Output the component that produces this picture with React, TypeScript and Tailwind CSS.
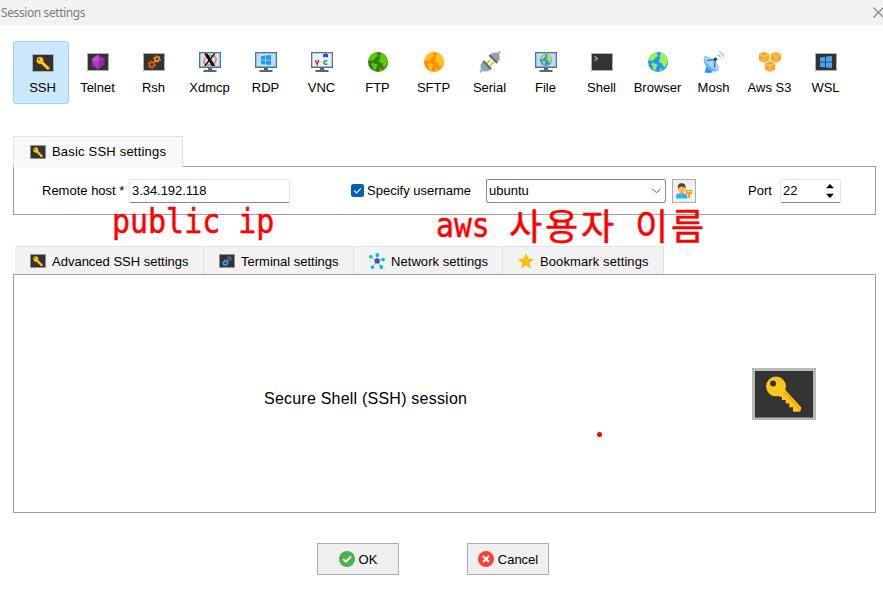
import React from "react";

type IconProps = { className?: string };

function KeyIcon({ className }: IconProps) {
  return (
    <svg className={className} viewBox="0 0 64 52" preserveAspectRatio="none">
      <rect width="64" height="52" fill="#b8b8b8" />
      <rect x="3" y="3" width="58" height="46.5" fill="#333333" />
      <path d="M33 21.5 49.3 39.5 48.5 43 47 43.8H41V39.3H37.3V35.6H33.7V32H30V29.3L26.5 28Z" fill="#ffc61e" />
      <path d="M31 24 33.5 23 48.5 40.5 47.5 42Z" fill="#efae0c" />
      <circle cx="24" cy="18.4" r="9.9" fill="#ffc61e" />
      <circle cx="21.1" cy="15.6" r="3" fill="#333333" />
    </svg>
  );
}

function KeySmall({ className }: IconProps) {
  return (
    <svg className={className} viewBox="0 0 22 18" preserveAspectRatio="none">
      <rect width="22" height="18" fill="#b0b0b0" />
      <rect x="1" y="1" width="20" height="16" fill="#333333" />
      <path d="M10 6.6 17.4 13.5V15.4H14.6L13.2 13.6 11.6 12.4 10.4 10.8 8.2 9.6Z" fill="#ffc61e" />
      <circle cx="8" cy="6.4" r="3.4" fill="#ffc61e" />
      <circle cx="6.9" cy="5.4" r=".9" fill="#333333" />
    </svg>
  );
}

function Telnet() {
  return (
    <svg width="22" height="18" viewBox="0 0 22 18">
      <rect width="22" height="18" fill="#b0b0b0" />
      <rect x="1" y="1" width="20" height="16" fill="#333333" />
      <path d="M11 1.5 17.3 5.4V11.2L11 16.5 4.7 12.4 5 6Z" fill="#9c2bb0" />
      <path d="M11 1.5 12.8 8 6.5 10 5 6Z" fill="#bb4fd0" />
      <path d="M6.5 10 12.8 8 11 16.5Z" fill="#a93bbf" />
      <path d="M12.8 8 17.3 5.4V11.2L11 16.5Z" fill="#8a2aa8" />
    </svg>
  );
}

function Gears({ className, a, b }: IconProps & { a: string; b: string }) {
  return (
    <svg className={className} viewBox="0 0 22 18" preserveAspectRatio="none">
      <rect width="22" height="18" fill="#b0b0b0" />
      <rect x="1" y="1" width="20" height="16" fill="#333333" />
      <circle cx="8.8" cy="11.5" r="2.5" fill="none" stroke={a} strokeWidth="1.8" />
      <circle cx="8.8" cy="11.5" r="3.7" fill="none" stroke={a} strokeWidth="1.3" strokeDasharray="1.7 2.17" />
      <circle cx="14" cy="6" r="2.1" fill="none" stroke={b} strokeWidth="1.5" />
      <circle cx="14" cy="6" r="3.2" fill="none" stroke={b} strokeWidth="1.2" strokeDasharray="1.4 1.95" />
    </svg>
  );
}

function Monitor({ screen = "#b9defa", children }: { screen?: string; children: React.ReactNode }) {
  return (
    <svg width="22" height="20" viewBox="0 0 22 20">
      <rect width="22" height="16" fill="#5d7380" />
      <rect x="1.3" y="1.3" width="19.4" height="13.2" fill={screen} />
      <path d="M9 16h4v2h4.5v2h-13v-2H9Z" fill="#536873" />
      {children}
    </svg>
  );
}

function Windows({ x = 0, y = 0, s = 1, fill = "#2196f3" }: { x?: number; y?: number; s?: number; fill?: string }) {
  return (
    <g transform={`translate(${x} ${y}) scale(${s})`} fill={fill}>
      <path d="M0 1.2 4.3.6V4.7H0ZM5 .5 10 0V4.7H5ZM0 5.4H4.3V9.5L0 8.9ZM5 5.4H10V10L5 9.5Z" />
    </g>
  );
}

function Lands({ fill }: { fill: string }) {
  return (
    <g fill={fill}>
      <path d="M1.1 6.2C2.6 2.8 5 1 8.5.3L9.7 1.4 8.3 2.5 10.7 3.5 9.2 5.1 7.9 4.7 7.2 6.6 5.2 8 4.7 9.6 3.2 8.2 1 8.8Z" />
      <path d="M4.1 11.1 7 11.4 9.9 13.2 8.4 15 7.6 17.6 6.7 19 4.9 16.3 4.7 14.1 3.2 12.5Z" />
      <path d="M12.3 2.2 14 1 17.7 3.8 19.4 7.4 19.3 11.2 17.8 13.8 16.7 15.7 14.9 14.1 14.3 11.4 11.7 10.6 10.8 8.3 12.4 6.1 11.8 4.5Z" />
      <path d="M12.1 16.8 14.4 16.1 13.5 18.4 11.4 19Z" />
    </g>
  );
}

function Globe({ sea, land }: { sea: string; land: string }) {
  return (
    <svg width="20" height="20" viewBox="0 0 20 20">
      <circle cx="10" cy="10" r="10" fill={sea} />
      <Lands fill={land} />
    </svg>
  );
}

function Serial() {
  return (
    <svg width="22" height="22" viewBox="0 0 22 22">
      <path d="M1 21.5 3.5 18.5M18.5 3.5 21.2.5" stroke="#90a4ae" strokeWidth="1.6" />
      <path d="m7.8 12.5 3.6-3.7M11 15l4-4" stroke="#ffb300" strokeWidth="1.7" />
      <path d="M4.3 10.2 12 18.3 9.2 20.2 4.5 20.4 1.6 18.2 1.6 13.4Z" fill="#90a4ae" />
      <path d="m3.5 10.7 1.6-1.5 7.8 8-1.6 1.5Z" fill="#546e7a" />
      <path d="m10.7 3.6 7.8 8 2-3 .2-4.8-2.2-2.2-4.5.1Z" fill="#90a4ae" />
      <path d="m9.6 4.7 1.5-1.5 7.8 8-1.5 1.5Z" fill="#546e7a" />
    </svg>
  );
}

function Shell() {
  return (
    <svg width="22" height="18" viewBox="0 0 22 18">
      <rect width="22" height="18" fill="#b0b0b0" />
      <rect x="1" y="1" width="20" height="16" fill="#333333" />
      <path d="m3.5 3.5 3.2 2-3.2 2" stroke="#e4e4e4" fill="none" />
    </svg>
  );
}

function Dish() {
  return (
    <svg width="22" height="22" viewBox="0 0 22 22">
      <path d="M1.8 21.8 3 16H8l1.5 5.8Z" fill="#2196f3" />
      <path d="M1.4 5C-.8 10.5 3 18.4 9.6 20.2 12.5 20.9 15 20 16 18.6Z" fill="#64b5f6" />
      <ellipse cx="8.6" cy="12" rx="9.8" ry="3.6" transform="rotate(43 8.6 12)" fill="#a3d3fa" />
      <path d="m4 9.5 8.2-1-.7 8" fill="none" stroke="#37566b" strokeWidth="1.1" />
      <circle cx="12.4" cy="8.3" r="1.7" fill="#1a3f9e" />
      <path d="M14.3 3.6c1.8.7 2.9 1.8 3.4 3.6M15.8.5c3.1 1 4.8 3.1 5.3 6.3" fill="none" stroke="#7cc0f7" strokeWidth="1.2" strokeDasharray="3.4 .8" />
    </svg>
  );
}

function Cube({ x, y }: { x: number; y: number }) {
  return (
    <g transform={`translate(${x} ${y})`}>
      <path d="M5.2 0 10.4 2V8.2L5.2 10.8 0 8.2V2Z" fill="#ffa726" />
      <path d="m.7 2.5 4.5 2 4.5-2M5.2 4.5v5.4" stroke="#ffe3b9" strokeWidth=".7" fill="none" />
    </g>
  );
}

function Aws() {
  return (
    <svg width="22" height="20" viewBox="0 0 22 20">
      <Cube x={0} y={0} />
      <Cube x={11.6} y={0} />
      <Cube x={5.8} y={9.2} />
    </svg>
  );
}

const tools: { label: string; icon: React.ReactNode }[] = [
  { label: "Telnet", icon: <Telnet /> },
  { label: "Rsh", icon: <Gears className="h-[18px] w-[22px]" a="#e65100" b="#fb9a17" /> },
  {
    label: "Xdmcp",
    icon: (
      <Monitor screen="#cbe6fb">
        <ellipse cx="11" cy="8.3" rx="6.3" ry="4.5" transform="rotate(-18 11 8.3)" fill="none" stroke="#f4793b" strokeWidth="1.5" />
        <path d="M5 1.5H8.5L16.3 14H12.8Z" fill="#111" />
        <path d="M15.8 1.5 5.7 14" stroke="#111" strokeWidth="1.3" />
      </Monitor>
    ),
  },
  { label: "RDP", icon: <Monitor><Windows x={6} y={3} /></Monitor> },
  {
    label: "VNC",
    icon: (
      <Monitor screen="#e3f2fd">
        <path d="m4.4 8 1.7 4.5L7.8 8" fill="none" stroke="#f02020" strokeWidth="1.5" />
        <path d="M12.8 5.2V3.7c0-2 3.6-2 3.6 0v1.5M12.8 4h3.6" fill="none" stroke="#2222dd" strokeWidth="1.3" />
        <path d="M16.2 9.2c-1.3-1-3.3-.4-3.3 1.3s2 2.3 3.3 1.3" fill="none" stroke="#159b35" strokeWidth="1.5" />
      </Monitor>
    ),
  },
  { label: "FTP", icon: <Globe sea="#387d10" land="#58cc0b" /> },
  { label: "SFTP", icon: <Globe sea="#ff8c0a" land="#ffc414" /> },
  { label: "Serial", icon: <Serial /> },
  {
    label: "File",
    icon: (
      <Monitor>
        <g transform="translate(5 2) scale(.6)">
          <circle cx="10" cy="10" r="10" fill="#2196e3" />
          <Lands fill="#c9d63f" />
        </g>
      </Monitor>
    ),
  },
  { label: "Shell", icon: <Shell /> },
  { label: "Browser", icon: <Globe sea="#2196f3" land="#98f54b" /> },
  { label: "Mosh", icon: <Dish /> },
  { label: "Aws S3", icon: <Aws /> },
  {
    label: "WSL",
    icon: (
      <svg width="22" height="18" viewBox="0 0 22 18">
        <rect width="22" height="18" fill="#b0b0b0" />
        <rect x="1" y="1" width="20" height="16" fill="#333" />
        <Windows x={5} y={3} s={1.2} fill="#42a5f5" />
      </svg>
    ),
  },
];

function Network() {
  return (
    <svg width="16" height="16" viewBox="0 0 16 16">
      <path d="M8 8 1.8 3.8M8 8V2M8 8l6.3-1.4M8 8l4.3 6M8 8l-4.6 6.2" stroke="#a3b3bc" strokeWidth="1" />
      <g fill="#00bcd4">
        <circle cx="1.9" cy="3.8" r="1.8" />
        <circle cx="8.3" cy="2" r="1.9" />
        <circle cx="14.2" cy="6.6" r="1.8" />
        <circle cx="12.3" cy="14" r="1.9" />
        <circle cx="3.5" cy="14.2" r="1.8" />
      </g>
      <circle cx="8.2" cy="7.9" r="2.7" fill="#3f51b5" />
    </svg>
  );
}

export default function App() {
  return (
    <div className="relative flex h-[596px] w-[883px] flex-col overflow-hidden bg-white font-['Liberation_Sans',sans-serif] text-[13px] leading-4 text-black">
      <header className="flex h-[25px] shrink-0 items-center justify-between bg-[#f2f2f2] pl-px">
        <span className="mt-px font-['Noto_Sans',sans-serif] text-[12px] tracking-[-0.4px] text-[#7d7d7d]">Session settings</span>
        <svg width="11" height="11" viewBox="0 0 11 11" className="-mr-px">
          <path d="m.5.5 10 10m0-10-10 10" stroke="#808080" strokeWidth="1.1" />
        </svg>
      </header>

      <nav className="mt-4 ml-[13px] flex h-[63px] shrink-0">
        <button className="flex w-14 flex-col items-center rounded-[3px] border border-[#99d1ff] bg-[#cce8ff] pt-3 pl-[3px]">
          <KeySmall className="h-[18px] w-[22px]" />
          <span className="mt-2">SSH</span>
        </button>
        {tools.map((t) => (
          <button key={t.label} className="flex w-14 flex-col items-center pt-2.5 pl-0.5">
            <span className="flex h-[22px] items-center">{t.icon}</span>
            <span className="mt-[7px] -ml-px whitespace-nowrap">{t.label}</span>
          </button>
        ))}
      </nav>

      <section className="mt-8 mr-[7px] ml-[13px] shrink-0">
        <div className="relative z-10 -mb-px flex h-[31px] w-[170px] items-center gap-[6px] border border-b-0 border-[#e3e3e3] bg-[#f9f9f9] pl-4">
          <KeySmall className="h-[14px] w-4" />
          <span className="tracking-[0.2px]">Basic SSH settings</span>
        </div>
        <div className="flex h-[49px] items-center border border-[#a0a0a0] pl-7">
          <span className="w-[87px]">Remote host *</span>
          <div className="flex h-6 w-[161px] items-center rounded-[2px] border border-[#e5e5e5] border-b-[#868686] pl-0.5 tracking-[-0.05px]">3.34.192.118</div>
          <svg width="13" height="13" viewBox="0 0 13 13" className="ml-[61px]">
            <rect width="13" height="13" rx="2.5" fill="#005fb8" />
            <path d="m3.2 6.6 2.3 2.3 4.4-4.5" stroke="#fff" fill="none" strokeWidth="1.1" />
          </svg>
          <span className="ml-[3px] w-[119px]">Specify username</span>
          <div className="flex h-6 w-[180px] items-center justify-between rounded-[2px] border border-[#868686] pr-1 pl-0.5">
            <span>ubuntu</span>
            <svg width="9" height="6" viewBox="0 0 9 6"><path d="m.5.8 4 4 4-4" fill="none" stroke="#606060" /></svg>
          </div>
          <button className="ml-1.5 flex h-6 w-6 items-center justify-center border border-[#adadad] bg-[#efefef]">
            <svg width="18" height="18" viewBox="0 0 18 18">
              <path d="M1 16.5v-2.2C1 12 3.7 11 6.7 11s5.6 1 5.6 3.3v2.2Z" fill="#29b6f6" />
              <path d="M4.7 9h4v2.6l-2 1.5-2-1.5Z" fill="#f59a23" />
              <ellipse cx="6.7" cy="6.5" rx="3.5" ry="4.2" fill="#ffb74d" />
              <path d="M3 7C2.3 3 4 1.3 6.6 1.3S11.2 3 10.5 7L9.4 4.7 4.8 4.6Z" fill="#424242" />
              <path d="M11 8h6v4h-2v4h-2v-4h-2Z" fill="#ffa000" />
              <path d="M12.5 9h3v1h-3Z" fill="#fff0cc" />
            </svg>
          </button>
          <span className="ml-[52px] w-8">Port</span>
          <div className="flex h-6 w-[61px] items-center justify-between rounded-[2px] border border-[#e5e5e5] border-b-[#868686] pr-[6px] pl-[2px]">
            <span>22</span>
            <svg width="8" height="14" viewBox="0 0 8 14"><path d="M4 0 8 4.3H0ZM0 9.7H8L4 14Z" /></svg>
          </div>
        </div>
      </section>

      <section className="mt-[31px] mr-[7px] ml-[13px] shrink-0">
        <div className="ml-0.5 flex h-7 w-[649px] border-t border-[#e3e3e3] bg-[#f2f2f2]">
          <div className="flex w-[189px] items-center gap-1.5 border-r border-[#e0e0e0] pt-px pl-[15px]">
            <KeySmall className="h-[14px] w-4" />
            <span className="mt-px">Advanced SSH settings</span>
          </div>
          <div className="flex w-[150px] items-center gap-1.5 border-r border-[#e0e0e0] pt-px pl-[15px]">
            <Gears className="h-[14px] w-4" a="#42a5f5" b="#5c6bc0" />
            <span className="mt-px">Terminal settings</span>
          </div>
          <div className="flex w-[149px] items-center gap-1.5 border-r border-[#e0e0e0] pt-px pl-[15px]">
            <Network />
            <span className="mt-px tracking-[0.06px]">Network settings</span>
          </div>
          <div className="flex w-[161px] items-center gap-1.5 border-r border-[#e0e0e0] pt-px pl-[15px]">
            <svg width="16" height="16" viewBox="0 0 16 16"><path d="m8 .3 2.3 5.3 5.7.5-4.3 3.8 1.3 5.6-5-3-5 3 1.3-5.6L0 6.1l5.7-.5Z" fill="#f4c20d" /></svg>
            <span className="mt-px tracking-[0.1px]">Bookmark settings</span>
          </div>
        </div>
        <div className="flex h-[239px] items-center border border-[#a0a0a0] pl-[250px]">
          <span className="mt-2.5 w-[488px] text-[16px] leading-5 tracking-[0.22px]">Secure Shell (SSH) session</span>
          <KeyIcon className="h-[52px] w-16" />
        </div>
      </section>

      <footer className="mt-[30px] ml-[317px] flex gap-[68px]">
        <button className="flex h-8 w-[82px] items-center justify-center gap-1 border border-[#adadad] bg-[#efefef]">
          <svg width="16" height="16" viewBox="0 0 16 16">
            <circle cx="8" cy="8" r="8" fill="#4caf50" />
            <path d="m4.2 8 2.7 2.7 5.3-5.3" stroke="#fff" strokeWidth="1.9" fill="none" />
          </svg>
          <span className="mt-px">OK</span>
        </button>
        <button className="flex h-8 w-[82px] items-center justify-center gap-1 border border-[#adadad] bg-[#efefef]">
          <svg width="16" height="16" viewBox="0 0 16 16">
            <circle cx="8" cy="8" r="8" fill="#f44336" />
            <path d="m5 5 6 6m0-6-6 6" stroke="#fff" strokeWidth="2" />
          </svg>
          <span className="mt-px">Cancel</span>
        </button>
      </footer>

      <span className="absolute top-[202px] left-[112px] z-20 origin-left scale-x-[0.908] font-['DejaVu_Sans_Mono',monospace] text-[33px] leading-10 whitespace-pre text-[#ff0000] [-webkit-text-stroke:0.5px_#ff0000]">public ip</span>
      <span className="absolute top-[206px] left-[436px] z-20 origin-left scale-x-[0.9] font-['DejaVu_Sans_Mono',monospace] text-[33px] leading-10 text-[#ff0000] [-webkit-text-stroke:0.5px_#ff0000]">aws</span>
      <span className="absolute top-[204px] left-[509px] z-20 font-['Noto_Sans_CJK_KR',sans-serif] text-[36px] leading-10 tracking-[2.9px] [word-spacing:7px] whitespace-pre text-[#ff0000] [-webkit-text-stroke:0.5px_#ff0000]">사용자 이름</span>
      <i className="absolute top-[432px] left-[597px] h-[5px] w-[5px] rounded-full bg-[#ff0000]" />
    </div>
  );
}
